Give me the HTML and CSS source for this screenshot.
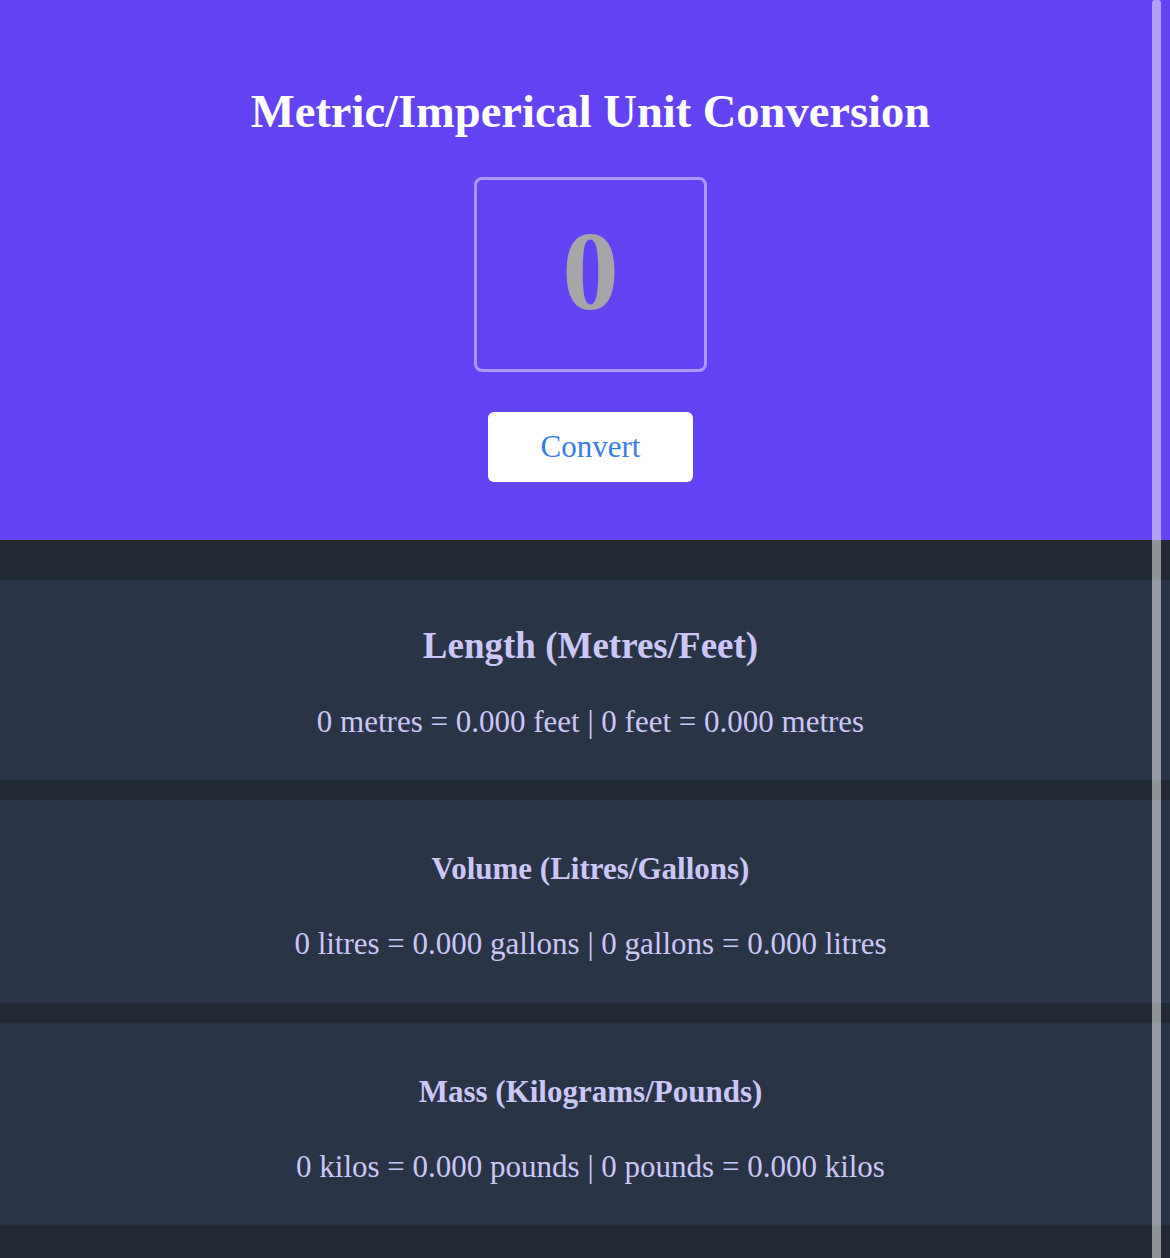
FILE: index.html
```html
<!DOCTYPE html>
<html>
<head>
<meta charset="utf-8">
<title>Unit Conversion</title>
<link rel="stylesheet" href="styles.css">
</head>
<body>
<header class="hero">
  <h1 class="hero-title">Metric/Imperical Unit Conversion</h1>
  <div class="value-box"><span class="value-text">0</span></div>
  <button class="convert-btn">Convert</button>
</header>
<main class="results">
  <section class="card card-length">
    <h2 class="card-title card-title-lg">Length (Metres/Feet)</h2>
    <p class="card-text card-text-lg">0 metres = 0.000 feet | 0 feet = 0.000 metres</p>
  </section>
  <section class="card">
    <h2 class="card-title">Volume (Litres/Gallons)</h2>
    <p class="card-text">0 litres = 0.000 gallons | 0 gallons = 0.000 litres</p>
  </section>
  <section class="card">
    <h2 class="card-title">Mass (Kilograms/Pounds)</h2>
    <p class="card-text">0 kilos = 0.000 pounds | 0 pounds = 0.000 kilos</p>
  </section>
</main>
<div class="scroll-bar"></div>
</body>
</html>
```

FILE: styles.css
```css
html, body {
  margin: 0;
  padding: 0;
}
body {
  background: #212935;
  font-family: "Liberation Serif", "Times New Roman", serif;
  min-height: 1258px;
}
.hero {
  background: #6443f5;
  height: 540px;
  box-sizing: border-box;
  padding: 84px 0 0 11px;
  display: flex;
  flex-direction: column;
  align-items: center;
}
.hero-title {
  margin: 0;
  color: #ffffff;
  font-size: 46.5px;
  font-weight: bold;
  line-height: 56px;
  white-space: nowrap;
}
.value-box {
  margin-top: 37px;
  width: 233px;
  height: 195px;
  box-sizing: border-box;
  border: 3px solid #ab96f9;
  border-radius: 8px;
  display: flex;
  align-items: center;
  justify-content: center;
}
.value-text {
  color: #a6a6a6;
  font-size: 113px;
  font-weight: bold;
  line-height: 1;
  margin-top: -9px;
}
.convert-btn {
  margin-top: 40px;
  width: 205px;
  height: 70px;
  background: #ffffff;
  border: none;
  border-radius: 6px;
  color: #3a7be8;
  font-family: "Liberation Serif", "Times New Roman", serif;
  font-size: 31px;
  padding: 0;
}
.results {
  padding-top: 40px;
  display: flex;
  flex-direction: column;
  gap: 20px;
}
.card {
  background: #293547;
  height: 202.5px;
  box-sizing: border-box;
  display: flex;
  flex-direction: column;
  align-items: center;
  color: #cdc6f8;
  padding: 51px 0 0 11px;
}
.card-length {
  height: 200px;
}
.card-title {
  margin: 0;
  font-size: 31px;
  font-weight: bold;
  line-height: 36px;
  white-space: nowrap;
}
.card-title-lg {
  font-size: 37px;
  line-height: 44px;
  margin-top: -7px;
}
.card-text {
  margin: 39px 0 0;
  font-size: 31px;
  line-height: 36px;
  white-space: nowrap;
}
.card-text-lg {
  margin-top: 36px;
}
.scroll-bar {
  position: fixed;
  top: 0;
  left: 1152px;
  width: 9px;
  height: 1258px;
  background: rgba(255, 255, 255, 0.5);
  border-radius: 3px 3px 0 0;
}
```
